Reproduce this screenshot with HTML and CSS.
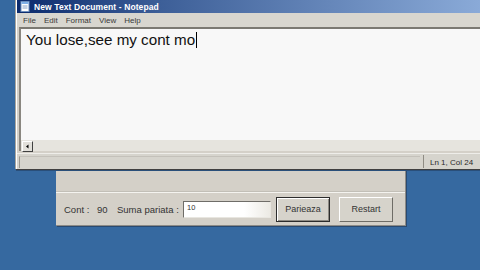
FILE: index.html
```html
<!DOCTYPE html>
<html lang="ro">
<head>
    <meta charset="UTF-8">
    <title>Notepad</title>
    <link rel="stylesheet" href="styles.css">
</head>
<body>
    <div class="desktop">

        <!-- Fereastra jocului (in spate) -->
        <div class="game-window">
            <div class="game-top"></div>
            <div class="game-row">
                <span class="lbl lbl-cont">Cont :</span>
                <span class="val">90</span>
                <span class="lbl lbl-suma">Suma pariata :</span>
                <div class="bet-input">10</div>
                <button class="btn btn-default">Parieaza</button>
                <button class="btn">Restart</button>
            </div>
        </div>

        <!-- Notepad -->
        <div class="notepad">
            <div class="titlebar">
                <svg class="app-icon" width="10" height="11" viewBox="0 0 10 11">
                    <rect x="1" y="0.5" width="8" height="10" fill="#ffffff" stroke="#6d8fbf"/>
                    <rect x="1.5" y="1" width="7" height="2" fill="#7fb0e8"/>
                    <line x1="2.5" y1="5" x2="7.5" y2="5" stroke="#8aa3c8"/>
                    <line x1="2.5" y1="7" x2="7.5" y2="7" stroke="#8aa3c8"/>
                </svg>
                <span class="title">New Text Document - Notepad</span>
            </div>
            <div class="menubar">
                <span>File</span>
                <span>Edit</span>
                <span>Format</span>
                <span>View</span>
                <span>Help</span>
            </div>
            <div class="editor">
                <div class="text">You lose,see my cont mo<span class="caret"></span></div>
                <div class="hscroll">
                    <div class="scroll-btn">
                        <svg width="7" height="7" viewBox="0 0 7 7"><path d="M4.5 1.5 L2 3.5 L4.5 5.5 Z" fill="#000"/></svg>
                    </div>
                </div>
            </div>
            <div class="statusbar">
                <div class="status-main"></div>
                <div class="status-pos">Ln 1, Col 24</div>
            </div>
        </div>

    </div>
</body>
</html>
```

FILE: styles.css
```css
body {
    margin: 0;
    padding: 0;
    overflow: hidden;
    font-family: 'Liberation Sans', Arial, sans-serif;
}
.desktop {
    position: relative;
    width: 480px;
    height: 270px;
    background-color: #3669a0;
    overflow: hidden;
}

/* notepad */
.notepad {
    position: absolute;
    left: 16px;
    top: 0;
    width: 480px;
    height: 169px;
    display: flex;
    flex-direction: column;
    background-color: #d4d0c8;
    border-left: 1px solid #ffffff;
    box-shadow: -1px 0 0 #a9a69e, 0 1px 0 #404040, 0 2px 0 #2a4f7a;
}
.titlebar {
    height: 13px;
    display: flex;
    align-items: center;
    gap: 4px;
    padding-left: 3px;
    background: linear-gradient(to right, #0b2a6c, #3d5f98 30%, #8eaedb 100%);
}
.app-icon {
    flex-shrink: 0;
}
.title {
    color: #ffffff;
    font-weight: bold;
    font-size: 8.5px;
    letter-spacing: 0.1px;
}
.menubar {
    height: 14px;
    display: flex;
    align-items: center;
    gap: 8px;
    padding-left: 6px;
    font-size: 8px;
    color: #3a3a3a;
    background-color: #d8d6cf;
}
.editor {
    flex: 1;
    display: flex;
    flex-direction: column;
    margin: 0 0 2px 2px;
    border-top: 2px solid #7b7972;
    border-left: 2px solid #8a8780;
    background-color: #f8f8f8;
}
.text {
    flex: 1;
    padding: 2px 0 0 5px;
    font-size: 15.2px;
    color: #111111;
    line-height: 18px;
}
.caret {
    display: inline-block;
    width: 1px;
    height: 16px;
    margin-left: 1px;
    vertical-align: -3px;
    background-color: #000000;
}
.hscroll {
    height: 11px;
    margin-top: -2px;
    display: flex;
    background-color: #e6e4de;
}
.scroll-btn {
    width: 9px;
    height: 9px;
    margin: 1px 0 0 1px;
    display: flex;
    align-items: center;
    justify-content: center;
    background-color: #e2e0da;
    border: 1px solid #ffffff;
    border-right-color: #404040;
    border-bottom-color: #404040;
}
.statusbar {
    height: 15px;
    display: flex;
    font-size: 8px;
    color: #2a2a2a;
    background-color: #d6d4cd;
    border-top: 1px solid #eeede9;
}
.status-main {
    flex: 1;
    margin: 2px 3px 1px 2px;
    border-left: 1px solid #9a978f;
    border-top: 1px solid #c4c1ba;
}
.status-pos {
    width: 67px;
    padding: 3px 0 0 6px;
    border-left: 1px solid #8f8c84;
    margin: 1px 0;
}

/* fereastra jocului */
.game-window {
    position: absolute;
    left: 56px;
    top: 168px;
    width: 349px;
    height: 57px;
    display: flex;
    flex-direction: column;
    background-color: #d4d0c8;
    border-right: 1px solid #8d8b86;
    border-bottom: 1px solid #8d8b86;
    box-shadow: 1px 1px 0 #2a4a70;
}
.game-top {
    height: 24px;
    border-bottom: 1px solid #f4f3ef;
    box-shadow: 0 -1px 0 #c2bfb7 inset;
}
.game-row {
    flex: 1;
    display: flex;
    align-items: center;
    padding-left: 8px;
    font-size: 9.5px;
    color: #333333;
}
.lbl-cont {
    width: 33px;
}
.val {
    width: 20px;
}
.lbl-suma {
    width: 66px;
}
.bet-input {
    width: 83px;
    height: 14px;
    padding: 1px 0 0 3px;
    font-size: 7.5px;
    background: linear-gradient(to right, #ffffff, #ffffff 70%, #eceae4);
    border: 1px solid #6f6d68;
    border-right-color: #e8e6e0;
    border-bottom-color: #e8e6e0;
}
.btn {
    width: 54px;
    height: 25px;
    margin-left: 9px;
    font-family: 'Liberation Sans', Arial, sans-serif;
    font-size: 9px;
    color: #333333;
    background-color: #d6d3cb;
    border: 1px solid #ffffff;
    border-right-color: #6e6c66;
    border-bottom-color: #6e6c66;
    padding: 0;
}
.btn-default {
    margin-left: 5px;
    border: 1px solid #2c2c2c;
    box-shadow: inset 1px 1px 0 #ffffff, inset -1px -1px 0 #8d8a83;
}
```
